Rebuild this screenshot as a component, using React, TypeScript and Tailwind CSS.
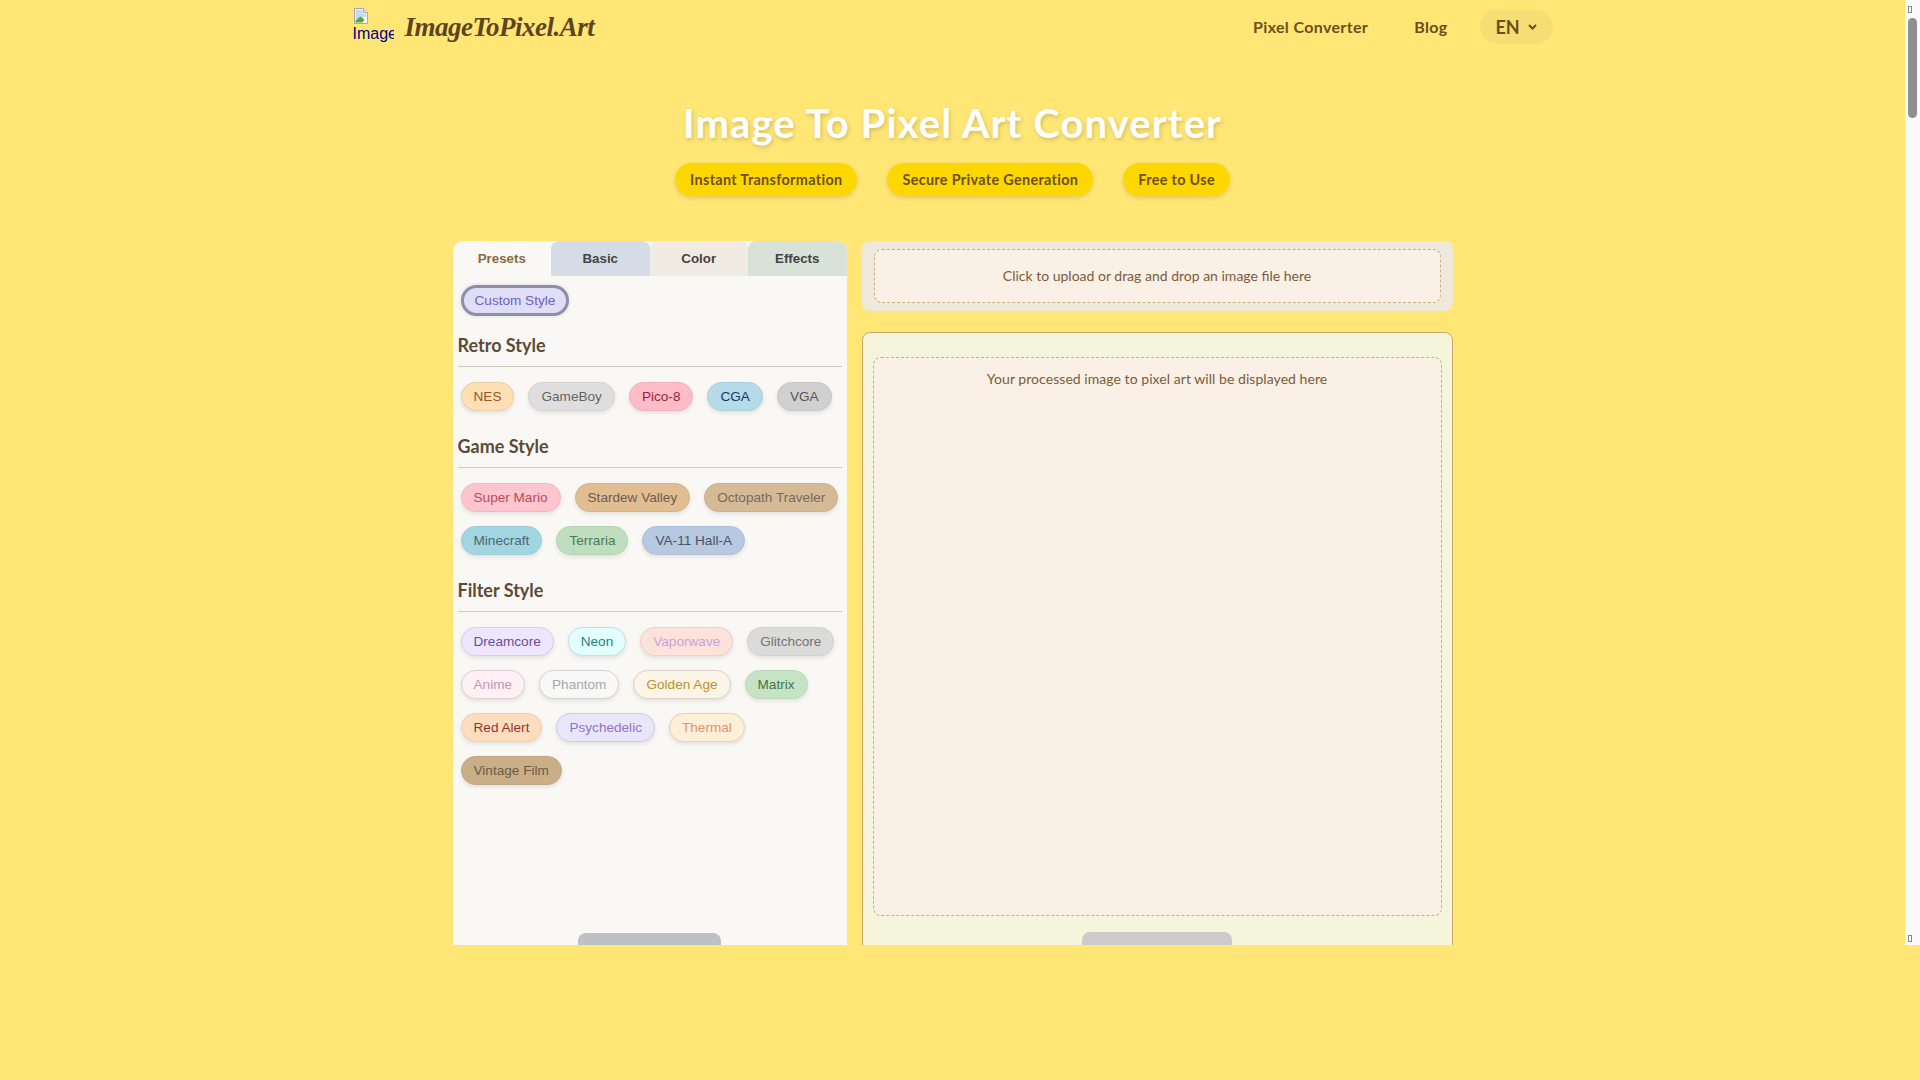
const retro = [
  { label: "NES", cls: "bg-[#ffdead] text-[#8b4513] border-[#e6c9a0]" },
  { label: "GameBoy", cls: "bg-[#dcdcdc] text-[#555555] border-[#cfcfcf]" },
  { label: "Pico-8", cls: "bg-[#ffb6c1] text-[#8b0a2a] border-[#f0aab6]" },
  { label: "CGA", cls: "bg-[#add8e6] text-[#00205b] border-[#a3cddb]" },
  { label: "VGA", cls: "bg-[#cccccc] text-[#444444] border-[#c4c4c4]" },
];

const game = [
  { label: "Super Mario", cls: "bg-[#ffc0cb] text-[#b03a48] border-[#ecb4be]" },
  { label: "Stardew Valley", cls: "bg-[#deb887] text-[#5d4e37] border-[#d3ae7e]" },
  { label: "Octopath Traveler", cls: "bg-[#d2b48c] text-[#6b5b47] border-[#c8aa83]" },
  { label: "Minecraft", cls: "bg-[#98d2e0] text-[#3b5560] border-[#90c8d6]" },
  { label: "Terraria", cls: "bg-[#b8dcb8] text-[#3f6b3f] border-[#afd2af]" },
  { label: "VA-11 Hall-A", cls: "bg-[#b0c4de] text-[#33415c] border-[#a7bbd4]" },
];

const filter = [
  { label: "Dreamcore", cls: "bg-[#ede4ff] text-[#5b3a8c] border-[#d3cbe3]" },
  { label: "Neon", cls: "bg-[#e0ffff] text-[#0b7a75] border-[#bfe0de]" },
  { label: "Vaporwave", cls: "bg-[#fde0d8] text-[#c39bd3] border-[#e8cfc8]" },
  { label: "Glitchcore", cls: "bg-[#d8d8d8] text-[#666666] border-[#cecece]" },
  { label: "Anime", cls: "bg-[#fff0f5] text-[#c48aa8] border-[#dcc9cf]" },
  { label: "Phantom", cls: "bg-[#f8f8f8] text-[#a0a0a0] border-[#d0d0d0]" },
  { label: "Golden Age", cls: "bg-[#fdf5e6] text-[#b8860b] border-[#d8cfc0]" },
  { label: "Matrix", cls: "bg-[#c1e1c1] text-[#2e6b2e] border-[#b7d7b7]" },
  { label: "Red Alert", cls: "bg-[#ffdab9] text-[#8b1a1a] border-[#eccbae]" },
  { label: "Psychedelic", cls: "bg-[#e6e6fa] text-[#8a63c9] border-[#c9c9da]" },
  { label: "Thermal", cls: "bg-[#ffefd5] text-[#e08a5a] border-[#dccfb8]" },
  { label: "Vintage Film", cls: "bg-[#c4a77d] text-[#5c4a32] border-[#bb9f76]" },
];

const nunito = { fontFamily: '"Lato", "Noto Sans", sans-serif' };

function Pill({ label, cls }: { label: string; cls: string }) {
  return (
    <button
      className={`h-[29px] px-[12px] rounded-[15px] border text-[13.6px] leading-none whitespace-nowrap opacity-90 shadow-[0_2px_4px_rgba(0,0,0,0.1)] font-['Liberation_Sans',sans-serif] ${cls}`}
    >
      {label}
    </button>
  );
}

function Section({ title, items }: { title: string; items: { label: string; cls: string }[] }) {
  return (
    <div>
      <h3 className="mx-[5px] h-[42px] flex items-center text-[18px] font-bold text-[#5a4a36] border-b border-[#cfcabf] pb-[1px]">
        {title}
      </h3>
      <div className="flex flex-wrap gap-[14px] px-[8px] pt-[15px] pb-[15px]">
        {items.map((p) => (
          <Pill key={p.label} {...p} />
        ))}
      </div>
    </div>
  );
}

export default function App() {
  return (
    <div className="h-[1080px] overflow-hidden bg-[#ffe675] text-[#6b4f1d]" style={nunito}>
      <div className="h-[945px] flex">
        <main className="flex-1 min-w-0 overflow-hidden">
          {/* Header */}
          <header className="w-[1200px] mx-auto h-[54px] flex items-center justify-between">
            <div className="flex items-center">
              <div className="w-[41px] h-[38px] overflow-hidden">
                <svg width="16" height="16" viewBox="0 0 16 16" className="block">
                  <path d="M1.5 0.5h9l4 4v11h-13z" fill="#fff" stroke="#a9a9a9" />
                  <path d="M10.5 0.5v4h4" fill="#e8e8e8" stroke="#a9a9a9" />
                  <path d="M2.5 1.5h7v4h4v3l-11 3z" fill="#c3d9f7" />
                  <path d="M2.5 14.5v-2l5-4 4 3-2 3z" fill="#58a83c" />
                </svg>
                <span className="block mt-[1px] text-[16px] leading-[18px] text-[#00008b] font-['Liberation_Sans',sans-serif] whitespace-nowrap">
                  Image
                </span>
              </div>
              <span className="ml-[11px] text-[27px] tracking-[-0.5px] leading-none italic font-bold text-[#5d4420] font-['Liberation_Serif',serif] whitespace-nowrap">
                ImageToPixel.Art
              </span>
            </div>
            <nav className="flex items-center font-bold text-[16px] tracking-[0.35px] text-[#6b4f1d]">
              <a className="mr-[46px]">Pixel Converter</a>
              <a className="mr-[32px]">Blog</a>
              <button className="w-[73px] h-[34px] rounded-[17px] bg-[#f7de74] text-[18px] tracking-normal font-bold flex items-center justify-center gap-[8px]">
                EN
                <svg width="9" height="6" viewBox="0 0 9 6" fill="none" stroke="currentColor" strokeWidth="2">
                  <path d="M1 1l3.5 3.5L8 1" />
                </svg>
              </button>
            </nav>
          </header>

          {/* Title */}
          <h1 className="mt-[46px] h-[46px] flex items-center justify-center text-[40px] tracking-[1.1px] font-bold text-white [text-shadow:1px_2px_4px_rgba(0,0,0,0.18)]">
            Image To Pixel Art Converter
          </h1>
          <div className="mt-[17px] flex justify-center gap-[30px]">
            {["Instant Transformation", "Secure Private Generation", "Free to Use"].map((b) => (
              <span
                key={b}
                className="h-[33px] px-[15px] flex items-center rounded-[17px] bg-[#ffd700] text-[14.4px] tracking-[0.33px] font-bold text-[#6b4f1d] shadow-[0_2px_5px_rgba(0,0,0,0.12)]"
              >
                {b}
              </span>
            ))}
          </div>

          {/* Panels */}
          <div className="mt-[45px] w-[1000px] mx-auto flex gap-[15px]">
            <section className="w-[394px] shrink-0 bg-[#faf8f5] rounded-t-[10px] overflow-hidden">
              <div className="flex h-[35px] text-[13.33px] font-bold font-['Liberation_Sans',sans-serif]">
                <div className="flex-1 flex items-center justify-center rounded-t-[8px] bg-[#faf8f5] text-[#8b6b3d]">Presets</div>
                <div className="flex-1 flex items-center justify-center rounded-t-[8px] bg-[#d6dce5] text-[#444444]">Basic</div>
                <div className="flex-1 flex items-center justify-center rounded-t-[8px] bg-[#f0ebe3] text-[#444444]">Color</div>
                <div className="flex-1 flex items-center justify-center rounded-t-[8px] bg-[#d8e2d8] text-[#444444]">Effects</div>
              </div>
              <div className="px-[8px] pt-[9px]">
                <button className="h-[31px] px-[11px] rounded-[16px] border-[3px] border-[#8e8ea6] bg-[#e0def6] text-[#6a62bf] text-[13.6px] leading-none whitespace-nowrap shadow-[0_0_4px_rgba(0,0,0,0.12)] font-['Liberation_Sans',sans-serif]">
                  Custom Style
                </button>
              </div>
              <div className="mt-[9px]">
                <Section title="Retro Style" items={retro} />
                <Section title="Game Style" items={game} />
                <Section title="Filter Style" items={filter} />
              </div>
              <div className="mt-[133px] mx-auto w-[143px] h-[40px] rounded-t-[8px] bg-[#bdc1c6]" />
            </section>

            <div className="flex-1 min-w-0">
              <section className="h-[70px] rounded-[8px] bg-[#efe9dc] px-[12px] py-[8px]">
                <div className="h-[54px] pb-[2px] flex items-center justify-center rounded-[8px] border border-dashed border-[#c9ad85] bg-[#faf0e6] text-[14px] text-[#7a5c3a]">
                  Click to upload or drag and drop an image file here
                </div>
              </section>
              <section className="mt-[21px] rounded-[8px] border border-[#c9a96a] bg-[#f5f5dc] px-[10px] pt-[24px]">
                <div className="h-[559px] rounded-[8px] border border-dashed border-[#c9ad85] bg-[#faf0e6] pt-[10px] text-center text-[14px] tracking-[0.05px] text-[#7a5c3a]">
                  Your processed image to pixel art will be displayed here
                </div>
                <div className="mt-[16px] mx-auto w-[150px] h-[40px] rounded-t-[8px] bg-[#cccccc]" />
              </section>
            </div>
          </div>
        </main>

        {/* Scrollbar */}
        <div className="relative w-[15px] shrink-0 bg-[#fafafa]">
          <span className="absolute left-[3px] top-[6px] w-[4px] h-[7px] border border-[#888888]" />
          <span className="absolute left-[3px] top-[18px] w-[9px] h-[100px] rounded-[5px] bg-[#8f8f8f]" />
          <span className="absolute left-[3px] bottom-[3px] w-[4px] h-[7px] border border-[#888888]" />
        </div>
      </div>
    </div>
  );
}
